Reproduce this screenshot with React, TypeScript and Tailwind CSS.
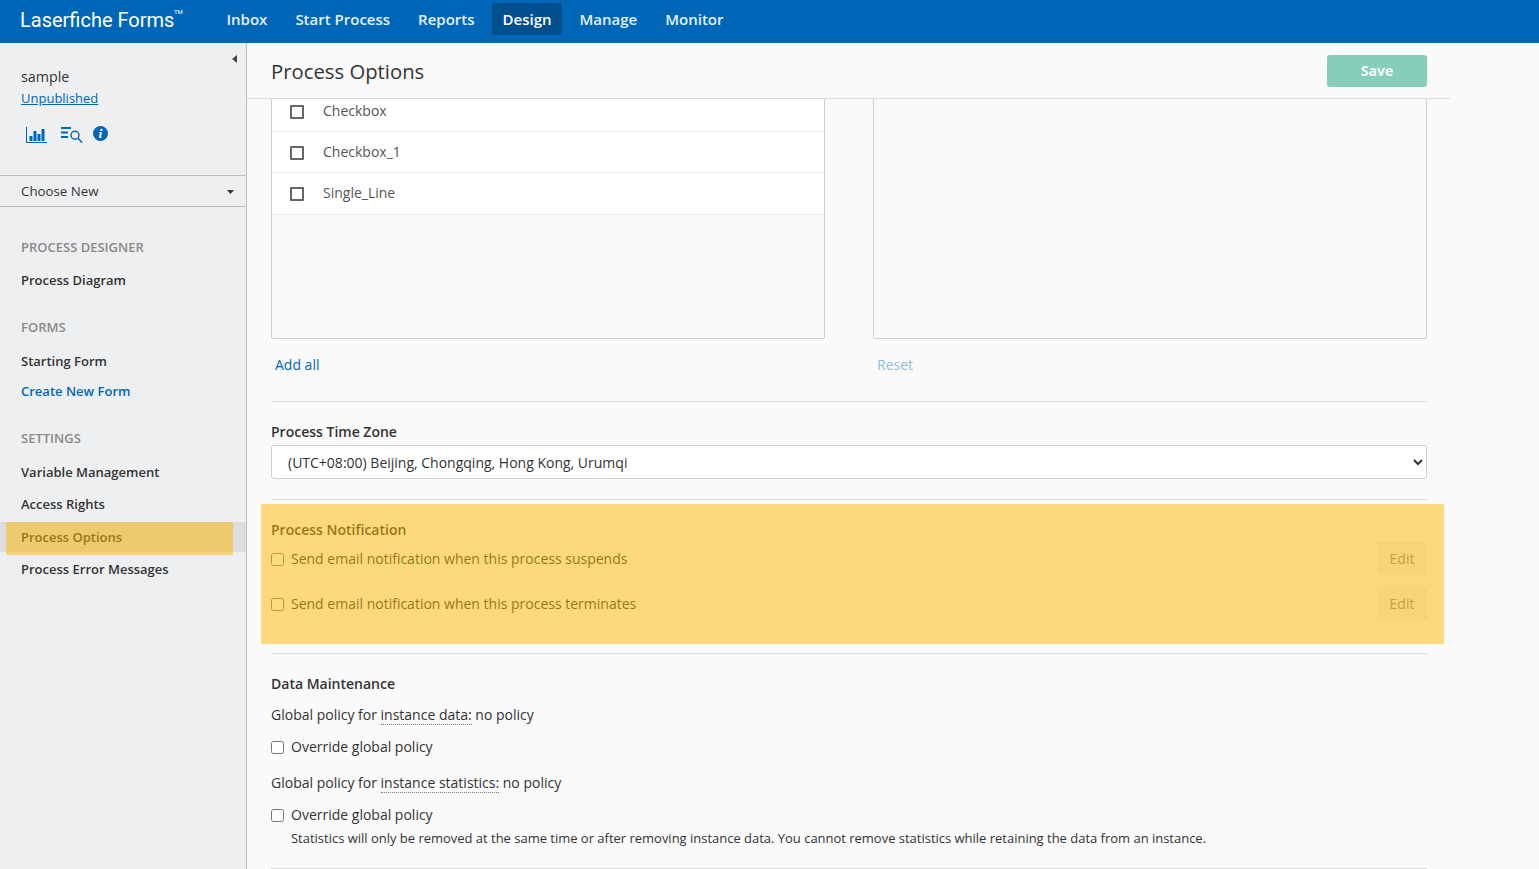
import type { ReactNode } from "react";

const nav = ["Inbox", "Start Process", "Reports", "Design", "Manage", "Monitor"];
const fields = [
  { name: "Checkbox", cls: "h-[33px] pb-[7px]", text: "-translate-y-px" },
  { name: "Checkbox_1", cls: "h-[41px] pt-[2px]", text: "-translate-y-[2px]" },
  { name: "Single_Line", cls: "h-[42px] pt-[1px] border-[#dcdcdc]", text: "-translate-y-[2px]" },
];

const SideHeading = ({ children, className }: { children: string; className: string }) => (
  <div className={`px-[21px] text-[13px] leading-[18px] font-semibold text-[#8a8a8a] ${className}`}>{children}</div>
);

const SideLink = ({ children, className, blue }: { children: string; className: string; blue?: boolean }) => (
  <div className={`px-[21px] text-[13px] leading-[18px] font-[550] ${blue ? "text-[#0067b8]" : "text-[#333]"} ${className}`}>
    {children}
  </div>
);

const Divider = ({ className }: { className: string }) => <div className={`h-px bg-[#dcdcdc] ${className}`} />;

const CheckRow = ({ children, className }: { children: ReactNode; className: string }) => (
  <label className={`flex items-center text-[14px] leading-[19px] ${className}`}>
    <input type="checkbox" className="m-0 h-[13px] w-[13px] translate-y-px" />
    <span className="ml-[7px]">{children}</span>
  </label>
);

const App = () => {
  return (
    <div className="relative h-[869px] w-[1539px] overflow-hidden bg-[#fafafa] text-[#333] [font-family:'Open_Sans',sans-serif]">
      <header className="flex h-[43px] items-start bg-[#0067b8] text-white">
        <div className="relative ml-[20px] w-[196px] text-[20px] leading-[40px] [font-family:Roboto,sans-serif]">
          Laserfiche Forms
          <span className="absolute left-[154px] top-[9px] text-[6px] leading-[6px]">TM</span>
        </div>
        <nav className="mt-[3px] flex items-center gap-[7px]">
          {nav.map((n) => (
            <div
              key={n}
              className={`flex h-[32px] items-center rounded-[3px] px-[10.5px] text-[15px] font-semibold ${n === "Design" ? "bg-[#004f8f]" : "text-[#e6f0f8]"}`}
            >
              {n}
            </div>
          ))}
        </nav>
      </header>

      <div className="flex h-[826px]">
        <aside className="relative w-[247px] shrink-0 border-r border-[#bdbdbd] bg-[#eeeff1]">
          <svg className="absolute left-[232px] top-[12px] h-[8px] w-[5px]" viewBox="0 0 5 8">
            <path d="M5 0v8L0 4z" fill="#444" />
          </svg>
          <div className="px-[21px] pt-[24px] text-[14.3px] leading-[19px]">sample</div>
          <div className="mt-[3px] px-[21px] text-[13px] leading-[18px] text-[#0067b8] underline">Unpublished</div>
          <div className="mt-[18px] flex h-[18px] items-center pl-[26px]">
            <svg className="mt-[2px] h-[16px] w-[21px]" viewBox="0 0 21 16" fill="#0067b8">
              <path d="M0 0h1v15h20v1H0z" />
              <rect x="3.5" y="9" width="3" height="5" />
              <rect x="7.5" y="4" width="3" height="10" />
              <rect x="11.5" y="7" width="3" height="7" />
              <rect x="15.5" y="2" width="3" height="12" />
            </svg>
            <svg className="ml-[14px] mt-[2px] h-[16px] w-[22px]" viewBox="0 0 22 16" fill="none" stroke="#0067b8">
              <path d="M0 1h10M0 5.5h7M0 10h7" strokeWidth="1.8" />
              <circle cx="14" cy="8.3" r="4" strokeWidth="1.4" />
              <path d="M17 11.3l4 4.2" strokeWidth="1.6" />
            </svg>
            <svg className="mb-[2px] ml-[10px] h-[15px] w-[15px]" viewBox="0 0 15 15">
              <circle cx="7.5" cy="7.5" r="7.5" fill="#0067b8" />
              <circle cx="8.4" cy="3.9" r="1.2" fill="#fff" />
              <path d="M6.1 6.2h3l-1.2 4.6h1l-.2.9H5.8l1.2-4.6h-1z" fill="#fff" />
            </svg>
          </div>
          <div className="mt-[32px] flex h-[32px] items-center justify-between border-y border-[#bdbdbd] pl-[21px] pr-[12px] pt-[1px] text-[13.3px] font-medium">
            Choose New
            <svg className="h-[4px] w-[7px]" viewBox="0 0 7 4">
              <path d="M0 0h7L3.5 4z" fill="#333" />
            </svg>
          </div>
          <SideHeading className="mt-[31px]">PROCESS DESIGNER</SideHeading>
          <SideLink className="mt-[15px]">Process Diagram</SideLink>
          <SideHeading className="mt-[29px]">FORMS</SideHeading>
          <SideLink className="mt-[16px]">Starting Form</SideLink>
          <SideLink className="mt-[12px]" blue>Create New Form</SideLink>
          <SideHeading className="mt-[29px]">SETTINGS</SideHeading>
          <SideLink className="mt-[16px]">Variable Management</SideLink>
          <SideLink className="mt-[14px]">Access Rights</SideLink>
          <div className="mt-[9px] flex h-[30px] items-center bg-[#dddddd] px-[21px] pt-[1px] text-[13px] font-[550]">Process Options</div>
          <SideLink className="mt-[8px]">Process Error Messages</SideLink>
        </aside>

        <main className="min-w-0 flex-1">
          <div className="flex h-[56px] w-[1203px] items-center justify-between border-b border-[#dcdcdc] pl-[24px] pr-[23px]">
            <h1 className="text-[20.3px] leading-[30px] text-[#333]">Process Options</h1>
            <button className="mt-[1px] h-[32px] w-[100px] rounded-[3px] bg-[#87cdbb] pb-[2px] text-[14px] font-bold text-[#f4fbf9]">Save</button>
          </div>

          <div className="box-content w-[1156px] pl-[24px]">
            <div className="flex justify-between">
              <div className="h-[240px] w-[554px] rounded-b-[2px] border border-t-0 border-[#cfcfcf]">
                {fields.map((f) => (
                  <div key={f.name} className={`flex items-center border-b border-[#ebebeb] bg-white pl-[18px] text-[14px] text-[#555] ${f.cls}`}>
                    <span className="h-[14px] w-[14px] rounded-[1px] border-2 border-[#666]" />
                    <span className={`ml-[19px] ${f.text}`}>{f.name}</span>
                  </div>
                ))}
              </div>
              <div className="h-[240px] w-[554px] rounded-b-[2px] border border-t-0 border-[#cfcfcf]" />
            </div>

            <div className="mt-[16px] flex text-[14px] leading-[20px]">
              <span className="ml-[4px] w-[602px] text-[#0067b8]">Add all</span>
              <span className="text-[#8fbbdd]">Reset</span>
            </div>

            <Divider className="mt-[26px]" />
            <div className="mt-[20px] text-[14px] leading-[19px] font-semibold">Process Time Zone</div>
            <select className="mt-[4px] block h-[34px] w-full rounded-[3px] border border-[#cfcfcf] bg-white pl-[12px] pr-[4px] text-[14px] text-[#333]">
              <option>(UTC+08:00) Beijing, Chongqing, Hong Kong, Urumqi</option>
            </select>
            <Divider className="mt-[20px]" />

            <div className="mt-[20px] text-[14px] leading-[19px] font-semibold">Process Notification</div>
            <div className="mt-[3px] flex h-[33px] items-center justify-between">
              <CheckRow className="">Send email notification when this process suspends</CheckRow>
              <button className="h-[33px] w-[50px] rounded-[3px] bg-[#f0f0f0] text-[14px] text-[#888]">Edit</button>
            </div>
            <div className="mt-[12px] flex h-[33px] items-center justify-between">
              <CheckRow className="">Send email notification when this process terminates</CheckRow>
              <button className="h-[33px] w-[50px] rounded-[3px] bg-[#f0f0f0] text-[14px] text-[#888]">Edit</button>
            </div>
            <Divider className="mt-[33px]" />

            <div className="mt-[20px] text-[14px] leading-[19px] font-semibold">Data Maintenance</div>
            <div className="mt-[12px] text-[14px] leading-[19px]">
              Global policy for <span className="border-b border-dotted border-[#777]">instance data:</span> no policy
            </div>
            <CheckRow className="mt-[13px]">Override global policy</CheckRow>
            <div className="mt-[17px] text-[14px] leading-[19px]">
              Global policy for <span className="border-b border-dotted border-[#777]">instance statistics:</span> no policy
            </div>
            <CheckRow className="mt-[13px]">Override global policy</CheckRow>
            <div className="ml-[20px] mt-[6px] text-[12.97px] leading-[17px]">
              Statistics will only be removed at the same time or after removing instance data. You cannot remove statistics while retaining the data from an instance.
            </div>
            <Divider className="mt-[21px]" />
          </div>
        </main>
      </div>

      {/* highlight overlays from the walkthrough */}
      <div className="pointer-events-none absolute left-[261px] top-[504px] h-[140px] w-[1183px] bg-[rgba(254,184,0,0.5)]" />
      <div className="pointer-events-none absolute left-[6px] top-[522px] h-[33px] w-[227px] bg-[rgba(254,184,0,0.5)]" />
    </div>
  );
};

export default App;
